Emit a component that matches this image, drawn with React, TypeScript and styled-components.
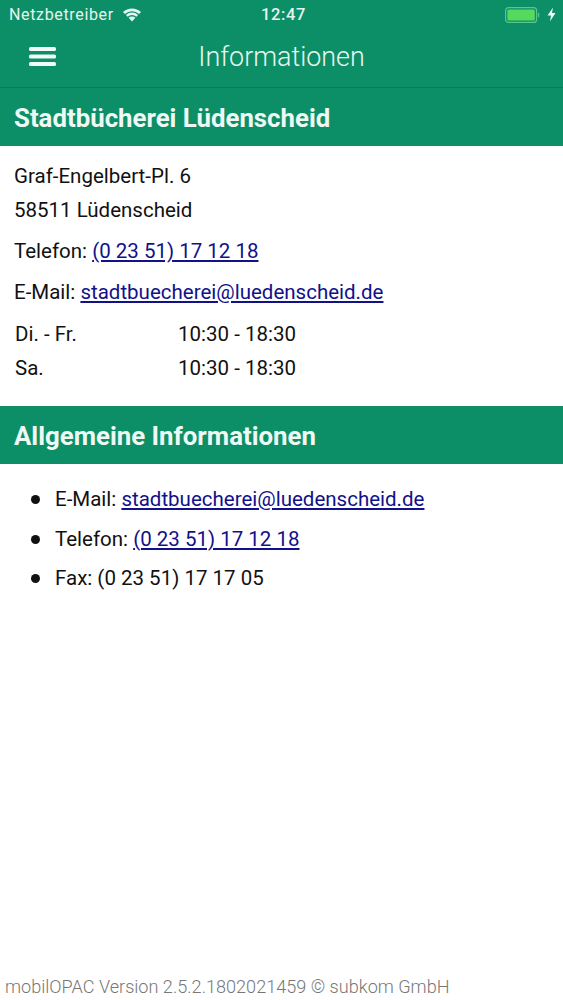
import React from 'react';
import styled, { createGlobalStyle } from 'styled-components';

const GlobalStyle = createGlobalStyle`
    html, body {
        margin: 0;
        padding: 0;
        background: #fff;
    }
`;

const Page = styled.div`
    width: 563px;
    height: 1000px;
    overflow: hidden;
    display: flex;
    flex-direction: column;
    font-family: Roboto, "Liberation Sans", sans-serif;
    font-size: 20.5px;
    color: #111;
`;

const StatusBar = styled.div`
    height: 29px;
    padding: 0 7px 0 9px;
    background: #0c8f66;
    color: #e6f4ef;
    display: grid;
    grid-template-columns: 1fr auto 1fr;
    align-items: center;
    font-size: 16px;
    letter-spacing: 0.65px;
`;

const StatusLeft = styled.div`
    display: flex;
    align-items: center;
    gap: 8px;
`;

const StatusRight = styled.div`
    display: flex;
    align-items: center;
    justify-content: flex-end;
    gap: 6px;
`;

const Clock = styled.div`
    font-size: 16.5px;
    font-weight: 500;
    padding-left: 2px;
`;

const NavBar = styled.div`
    height: 59px;
    padding-bottom: 3px;
    box-sizing: border-box;
    background: #0c8f66;
    border-bottom: 1px solid #0a7a57;
    display: grid;
    grid-template-columns: 1fr auto 1fr;
    align-items: center;
`;

const MenuButton = styled.div`
    padding-left: 29px;
    display: flex;
`;

const NavTitle = styled.div`
    font-size: 26.9px;
    font-weight: 300;
    color: #e8f6f1;
`;

const SectionHeader = styled.h2`
    margin: 0;
    height: 58px;
    box-sizing: border-box;
    padding: 2px 14px 0;
    background: #0c8f66;
    color: #eef8f4;
    font-size: 25.8px;
    font-weight: 700;
    display: flex;
    align-items: center;
`;

const Contact = styled.section`
    padding: 13px 14px 21px;
    display: flex;
    flex-direction: column;
`;

const Line = styled.div<{ $gap?: number }>`
    line-height: 34px;
    margin-top: ${({ $gap }) => $gap ?? 0}px;
`;

const Link = styled.a`
    color: #11118a;
    text-decoration: underline;
`;

const Hours = styled.div`
    margin-top: 8px;
    padding-left: 1px;
    display: grid;
    grid-template-columns: 163px 1fr;
    grid-auto-rows: 34px;
    align-items: center;
`;

const InfoList = styled.ul`
    margin: 0;
    padding: 16px 0 0 31px;
    list-style: none;
    line-height: 39.5px;
`;

const InfoItem = styled.li`
    display: flex;
    align-items: center;
    gap: 15px;

    &::before {
        content: '';
        width: 9px;
        height: 9px;
        border-radius: 50%;
        background: #111;
    }
`;

const Footer = styled.div`
    margin-top: auto;
    padding: 0 0 2px 5px;
    font-size: 18.1px;
    line-height: 22px;
    color: #777;
    font-weight: 300;
`;

const WifiIcon = () => (
    <svg width="20" height="15" viewBox="0 0 20 15" fill="#e6f4ef">
        <path d="M10 14.5 6.6 10.8a4.8 4.8 0 0 1 6.8 0z" />
        <path d="M5.6 9.8 3.9 8a8.9 8.9 0 0 1 12.2 0l-1.7 1.8a6.5 6.5 0 0 0-8.8 0z" />
        <path d="M2.9 7 1 5.1a13 13 0 0 1 18 0L17.1 7a10.4 10.4 0 0 0-14.2 0z" />
    </svg>
);

const BatteryIcon = () => (
    <svg width="36" height="16" viewBox="0 0 36 16">
        <rect x="0.6" y="0.6" width="31" height="14.8" rx="3" fill="none" stroke="#5cc48f" strokeWidth="1.2" />
        <rect x="2.4" y="2.4" width="27.4" height="11.2" rx="1.5" fill="#56d95f" />
        <rect x="33" y="6" width="1.2" height="4" fill="#5cc48f" />
    </svg>
);

const BoltIcon = () => (
    <svg width="9" height="15" viewBox="0 0 9 14" fill="#eef8f4">
        <path d="M6 0 0.5 8H4L3 14 8.5 5.6H5z" />
    </svg>
);

const MenuIcon = () => (
    <svg width="27" height="19" viewBox="0 0 27 19" fill="#f2faf7">
        <rect x="0" y="0" width="27" height="4" rx="1.6" />
        <rect x="0" y="7.5" width="27" height="4" rx="1.6" />
        <rect x="0" y="15" width="27" height="4" rx="1.6" />
    </svg>
);

const App = () => {
    const mail = 'stadtbuecherei@luedenscheid.de';
    const phone = '(0 23 51) 17 12 18';

    return (
        <Page>
            <GlobalStyle />
            <StatusBar>
                <StatusLeft>Netzbetreiber <WifiIcon /></StatusLeft>
                <Clock>12:47</Clock>
                <StatusRight><BatteryIcon /><BoltIcon /></StatusRight>
            </StatusBar>
            <NavBar>
                <MenuButton><MenuIcon /></MenuButton>
                <NavTitle>Informationen</NavTitle>
            </NavBar>
            <SectionHeader>Stadtbücherei Lüdenscheid</SectionHeader>
            <Contact>
                <Line>Graf-Engelbert-Pl. 6</Line>
                <Line>58511 Lüdenscheid</Line>
                <Line $gap={7}>Telefon: <Link href="#">{phone}</Link></Line>
                <Line $gap={7}>E-Mail: <Link href="#">{mail}</Link></Line>
                <Hours>
                    <span>Di. - Fr.</span>
                    <span>10:30 - 18:30</span>
                    <span>Sa.</span>
                    <span>10:30 - 18:30</span>
                </Hours>
            </Contact>
            <SectionHeader>Allgemeine Informationen</SectionHeader>
            <InfoList>
                <InfoItem><span>E-Mail: <Link href="#">{mail}</Link></span></InfoItem>
                <InfoItem><span>Telefon: <Link href="#">{phone}</Link></span></InfoItem>
                <InfoItem><span>Fax: (0 23 51) 17 17 05</span></InfoItem>
            </InfoList>
            <Footer>mobilOPAC Version 2.5.2.1802021459 © subkom GmbH</Footer>
        </Page>
    );
};

export default App;
